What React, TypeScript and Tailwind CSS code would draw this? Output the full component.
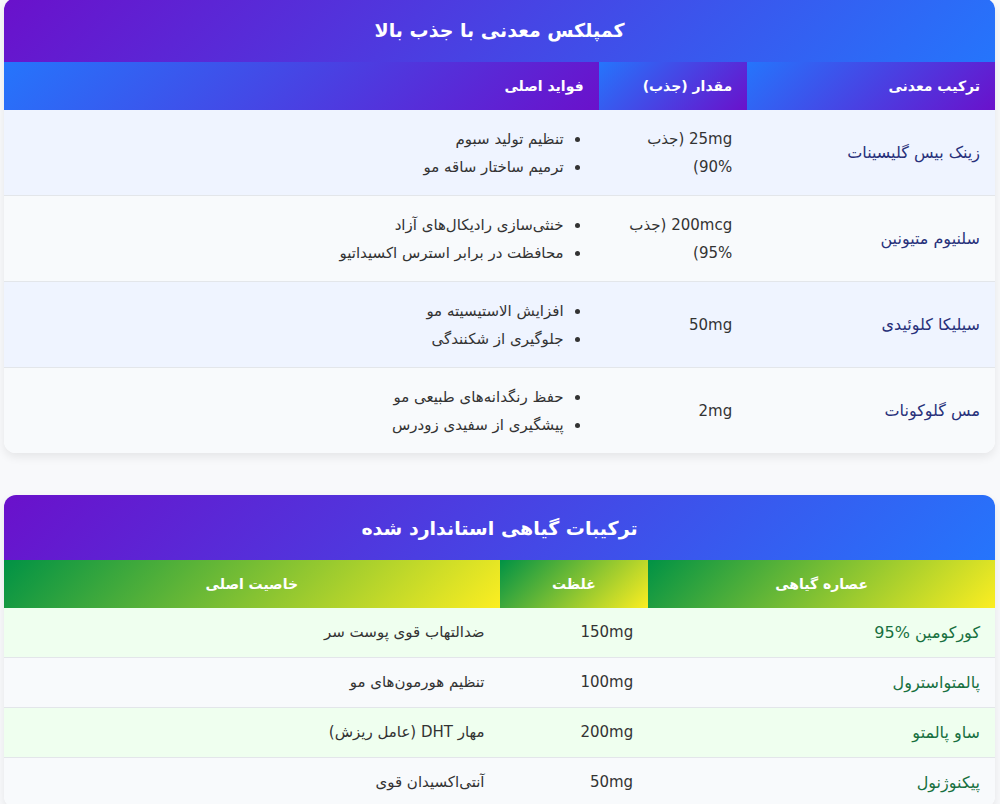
import React from 'react';

// جدول مواد معدنی و گیاهی

const minerals = [
    { name: 'زینک بیس گلیسینات', amount: '25mg (جذب %90)', benefits: ['تنظیم تولید سبوم', 'ترمیم ساختار ساقه مو'] },
    { name: 'سلنیوم متیونین', amount: '200mcg (جذب %95)', benefits: ['خنثی‌سازی رادیکال‌های آزاد', 'محافظت در برابر استرس اکسیداتیو'] },
    { name: 'سیلیکا کلوئیدی', amount: '50mg', benefits: ['افزایش الاستیسیته مو', 'جلوگیری از شکنندگی'] },
    { name: 'مس گلوکونات', amount: '2mg', benefits: ['حفظ رنگدانه‌های طبیعی مو', 'پیشگیری از سفیدی زودرس'] },
];

const herbs = [
    { name: 'کورکومین %95', dose: '150mg', effect: 'ضدالتهاب قوی پوست سر' },
    { name: 'پالمتواسترول', dose: '100mg', effect: 'تنظیم هورمون‌های مو' },
    { name: 'ساو پالمتو', dose: '200mg', effect: 'مهار DHT (عامل ریزش)' },
    { name: 'پیکنوژنول', dose: '50mg', effect: 'آنتی‌اکسیدان قوی' },
];

const App = () => {
    return (
        <div dir="rtl" className="min-h-screen bg-[#f8f9fb] px-[4px] pr-[5px] text-[#333] font-['DejaVu_Sans',sans-serif]">
            <div className="-mt-[2px] rounded-xl overflow-hidden shadow-[0_4px_10px_rgba(0,0,0,0.08)] bg-white">
                <div className="bg-[linear-gradient(135deg,#6a11cb,#2575fc)] py-[18px] text-center text-white text-[19px] font-bold leading-7">
                    کمپلکس معدنی با جذب بالا
                </div>
                <table className="w-full table-fixed border-collapse">
                    <thead>
                        <tr className="text-white text-sm font-bold">
                            <th className="w-[25%] py-[14px] px-[15px] text-right leading-5 bg-[linear-gradient(135deg,#2575fc,#6a11cb)]">ترکیب معدنی</th>
                            <th className="w-[15%] py-[14px] px-[15px] text-right leading-5 bg-[linear-gradient(135deg,#2575fc,#6a11cb)]">مقدار (جذب)</th>
                            <th className="py-[14px] px-[15px] text-right leading-5 bg-[linear-gradient(135deg,#2575fc,#6a11cb)]">فواید اصلی</th>
                        </tr>
                    </thead>
                    <tbody className="text-[15px]">
                        {minerals.map((m, i) => (
                            <tr key={m.name} className={(i % 2 === 0 ? 'bg-[#eff4ff]' : 'bg-[#f8fafc]') + ' border-b border-[#e3e6ea] last:border-b-0'}>
                                <td className="px-[15px] pt-[15px] pb-[14px] text-base text-[#27307a]">{m.name}</td>
                                <td className="px-[15px] pt-[15px] pb-[14px] leading-7">{m.amount}</td>
                                <td className="px-[15px] pt-[15px] pb-[14px]">
                                    <ul className="list-disc pr-5 leading-7">
                                        {m.benefits.map((b) => (
                                            <li key={b}>{b}</li>
                                        ))}
                                    </ul>
                                </td>
                            </tr>
                        ))}
                    </tbody>
                </table>
            </div>

            <div className="mt-[42px] rounded-xl overflow-hidden shadow-[0_4px_10px_rgba(0,0,0,0.08)] bg-white">
                <div className="bg-[linear-gradient(135deg,#6a11cb,#2575fc)] pt-[19px] pb-[18px] text-center text-white text-[19px] font-bold leading-7">
                    ترکیبات گیاهی استاندارد شده
                </div>
                <table className="w-full table-fixed border-collapse">
                    <thead>
                        <tr className="text-white text-sm font-bold">
                            <th className="w-[35%] py-[14px] px-[15px] text-center leading-5 bg-[linear-gradient(135deg,#009245,#fcee21)]">عصاره گیاهی</th>
                            <th className="w-[15%] py-[14px] px-[15px] text-center leading-5 bg-[linear-gradient(135deg,#009245,#fcee21)]">غلظت</th>
                            <th className="py-[14px] px-[15px] text-center leading-5 bg-[linear-gradient(135deg,#009245,#fcee21)]">خاصیت اصلی</th>
                        </tr>
                    </thead>
                    <tbody className="text-[15px]">
                        {herbs.map((h, i) => (
                            <tr key={h.name} className={(i % 2 === 0 ? 'bg-[#efffef]' : 'bg-[#f8fafc]') + ' border-b border-[#e3e6ea]'}>
                                <td className="px-[15px] py-[14px] leading-[21px] text-base text-[#17703f]">{h.name}</td>
                                <td className="px-[15px] py-[14px] leading-[21px]">{h.dose}</td>
                                <td className="px-[15px] py-[14px] leading-[21px]">{h.effect}</td>
                            </tr>
                        ))}
                    </tbody>
                </table>
            </div>
            <div className="h-10" />
        </div>
    );
};

export default App;
